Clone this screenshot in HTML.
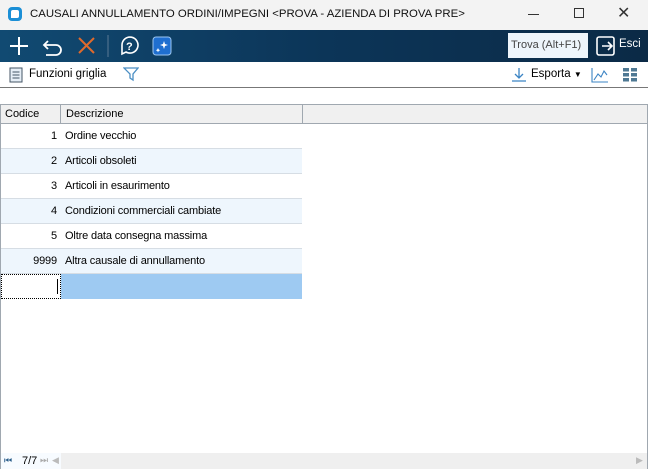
<!DOCTYPE html><html><head><style>
*{margin:0;padding:0;box-sizing:border-box}
body{width:648px;height:469px;overflow:hidden;background:#fff;font-family:"Liberation Sans",sans-serif;position:relative;font-size:11px;color:#000}
.a{position:absolute}
.g div{letter-spacing:-0.15px}
</style></head><body>
<div class="a" style="left:0;top:0;width:648px;height:30px;background:#f3f3f3"></div>
<div class="a" style="left:8px;top:7px;width:14px;height:14px;border-radius:4px;background:#1b8fd6"></div>
<div class="a" style="left:11px;top:10px;width:8px;height:8px;border-radius:2px 2px 2px 0;background:#fff"></div>
<div class="a" style="left:30px;top:8px;font-size:11.4px;color:#111">CAUSALI ANNULLAMENTO ORDINI/IMPEGNI &lt;PROVA - AZIENDA DI PROVA PRE&gt;</div>
<div class="a" style="left:528px;top:14px;width:11px;height:1px;background:#333"></div>
<div class="a" style="left:574px;top:8px;width:10px;height:10px;border:1px solid #333"></div>
<div class="a" style="left:617px;top:3px;font-size:16px;color:#333">✕</div>
<div class="a" style="left:0;top:30px;width:648px;height:32px;background:linear-gradient(90deg,#114a72,#0c3558 50%,#0b2a46)"></div>
<svg class="a" style="left:0;top:30px" width="180" height="32">
<path d="M10 16h18M19 7v18" stroke="#fff" stroke-width="2" fill="none"/>
<path d="M48 11l-4 4 4 4M44 15h12a5 5 0 0 1 0 10h-10" stroke="#fff" stroke-width="1.8" fill="none"/>
<path d="M79 8l15 15M94 8L79 23" stroke="#e06a2c" stroke-width="2" fill="none"/>
<path d="M108 5v22" stroke="#5a7a95" stroke-width="1"/>
<path d="M122 15a8 8 0 1 1 4 7l-4 2z" stroke="#fff" stroke-width="1.6" fill="none"/>
<text x="126" y="20" fill="#fff" font-size="11" font-weight="bold" font-family="Liberation Sans">?</text>
<rect x="153" y="7" width="18" height="18" rx="3" fill="#1f6fd0" stroke="#9cc6f0"/>
<path d="M164 11l1 3 3 1-3 1-1 3-1-3-3-1 3-1zM158 18l.7 1.5 1.5.7-1.5.7-.7 1.5-.7-1.5-1.5-.7 1.5-.7z" fill="#fff"/>
</svg>
<div class="a" style="left:508px;top:33px;width:80px;height:25px;background:#eef5fb;color:#444;font-size:11px;padding:6px 0 0 3px">Trova (Alt+F1)</div>
<svg class="a" style="left:595px;top:35px" width="22" height="22"><rect x="2" y="2" width="17" height="18" rx="2" stroke="#fff" stroke-width="1.6" fill="none"/><path d="M7 11h10M13 7l4 4-4 4" stroke="#fff" stroke-width="1.6" fill="none"/></svg>
<div class="a" style="left:619px;top:38px;color:#fff;font-size:11.5px">Esci</div>
<svg class="a" style="left:9px;top:67px" width="14" height="16"><rect x="1" y="1" width="12" height="14" fill="#e6eef6" stroke="#456"/><path d="M3.5 5h7M3.5 8h7M3.5 11h7" stroke="#456"/></svg>
<div class="a" style="left:29px;top:68px;font-size:11.5px">Funzioni griglia</div>
<svg class="a" style="left:123px;top:67px" width="16" height="15"><path d="M1 1h14l-5 6v6l-3-2V7z" fill="none" stroke="#4a8ec4" stroke-width="1.3"/></svg>
<svg class="a" style="left:511px;top:67px" width="16" height="16"><path d="M8 1v10M4 7l4 4 4-4M1 14h14" stroke="#3b84c4" stroke-width="1.3" fill="none"/></svg>
<div class="a" style="left:531px;top:68px;font-size:11.5px">Esporta <span style="font-size:8px">▼</span></div>
<svg class="a" style="left:591px;top:67px" width="18" height="16"><path d="M1 1v14h16M3 13l4-6 3 3 3-6 3 4" stroke="#3b84c4" stroke-width="1.1" fill="none"/></svg>
<svg class="a" style="left:623px;top:68px" width="14" height="14" fill="#4e7893"><rect x="0" y="0" width="6" height="3.5"/><rect x="8" y="0" width="6" height="3.5"/><rect x="0" y="5" width="6" height="3.5"/><rect x="8" y="5" width="6" height="3.5"/><rect x="0" y="10" width="6" height="3.5"/><rect x="8" y="10" width="6" height="3.5"/></svg>
<div class="a" style="left:0;top:87px;width:648px;height:1px;background:#777"></div>
<div class="a" style="left:0;top:104px;width:648px;height:365px;border:1px solid #a0a8b0;border-bottom:none"></div>
<div class="a" style="left:0;top:104px;width:648px;height:20px;background:#f0f0f0;border:1px solid #a0a8b0"></div>
<div class="a" style="left:60px;top:104px;width:1px;height:20px;background:#a0a8b0"></div>
<div class="a" style="left:302px;top:104px;width:1px;height:20px;background:#a0a8b0"></div>
<div class="a" style="left:5px;top:108px;font-size:11px">Codice</div>
<div class="a" style="left:66px;top:108px;font-size:11px">Descrizione</div>
<div class="a g" style="left:1px;top:124px;width:301px">
<div style="height:25px;background:#fff;border-bottom:1px solid #d6dde4;display:flex;align-items:center"><span style="width:60px;text-align:right;padding-right:4px">1</span><span style="padding-left:4px">Ordine vecchio</span></div>
<div style="height:25px;background:#eef6fd;border-bottom:1px solid #d6dde4;display:flex;align-items:center"><span style="width:60px;text-align:right;padding-right:4px">2</span><span style="padding-left:4px">Articoli obsoleti</span></div>
<div style="height:25px;background:#fff;border-bottom:1px solid #d6dde4;display:flex;align-items:center"><span style="width:60px;text-align:right;padding-right:4px">3</span><span style="padding-left:4px">Articoli in esaurimento</span></div>
<div style="height:25px;background:#eef6fd;border-bottom:1px solid #d6dde4;display:flex;align-items:center"><span style="width:60px;text-align:right;padding-right:4px">4</span><span style="padding-left:4px">Condizioni commerciali cambiate</span></div>
<div style="height:25px;background:#fff;border-bottom:1px solid #d6dde4;display:flex;align-items:center"><span style="width:60px;text-align:right;padding-right:4px">5</span><span style="padding-left:4px">Oltre data consegna massima</span></div>
<div style="height:25px;background:#eef6fd;border-bottom:1px solid #d6dde4;display:flex;align-items:center"><span style="width:60px;text-align:right;padding-right:4px">9999</span><span style="padding-left:4px">Altra causale di annullamento</span></div>
<div style="height:25px;background:#9ecaf2;display:flex"><span style="width:60px;background:#fff;border:1px dotted #000;position:relative"><i style="position:absolute;right:2px;top:4px;width:1px;height:15px;background:#000"></i></span></div>
</div>
<div class="a" style="left:1px;top:453px;width:646px;height:16px;background:#efefef"></div>
<div class="a" style="left:1px;top:453px;width:60px;height:16px;background:#f7fbff"></div>
<div class="a" style="left:4px;top:455px;font-size:9px;color:#2a5d8a">⏮</div>
<div class="a" style="left:22px;top:455px;font-size:11px">7/7</div>
<div class="a" style="left:40px;top:455px;font-size:9px;color:#aaa">⏭</div>
<div class="a" style="left:52px;top:455px;font-size:9px;color:#bbb">◀</div>
<div class="a" style="left:636px;top:455px;font-size:9px;color:#bbb">▶</div>
</body></html>
